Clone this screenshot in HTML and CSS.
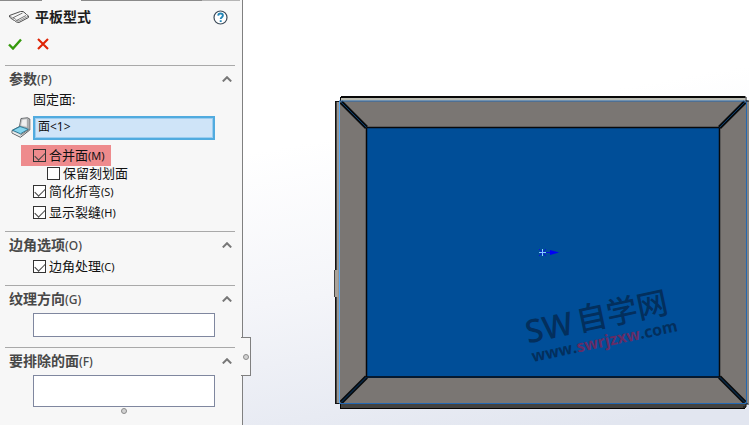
FILE: index.html
```html
<!DOCTYPE html>
<html lang="zh-CN">
<head>
<meta charset="utf-8">
<meta name="viewport" content="width=device-width, initial-scale=1">
<title>平板型式</title>
<link rel="stylesheet" href="styles.css">
</head>
<body>
<main class="app">
  <form class="panel">
    <div class="tabs"><span class="tab-edge"></span><span class="tab-edge"></span><span class="tab-edge light"></span></div>
    <header class="title-row">
      <svg class="title-icon" viewBox="0 0 22 14" aria-hidden="true">
        <path d="M1.500 5.500 12.500 1.500 15 1.500 17 3 18.500 4.500 20.500 6V7.500L11 12.500 8.500 12 6.500 10.500 4.500 9.500 1.500 7Z" fill="#f6f6f6" stroke="#505050"/>
        <path d="M1.500 5.500 4.500 8 7 8.500 8.500 10.500 11 11 20.500 6" fill="none" stroke="#666" stroke-width=".7"/>
        <path d="M4.500 8 14.500 3M8.500 10.500 18 5.500" fill="none" stroke="#666" stroke-width=".9"/>
      </svg>
      <h1>平板型式</h1>
      <button type="button" class="help" aria-label="帮助">
        <svg viewBox="0 0 15 15"><circle cx="7.5" cy="7.5" r="6.5" fill="#fff" stroke="#3d4b59" stroke-width="1.2"/><path d="M5.2 5.6C5.3 4 6.2 3.5 7.5 3.5c1.5 0 2.4.8 2.4 2 0 1.700-2.200 1.700-2.200 3.600M7.700 10.200v1.700" fill="none" stroke="#2386b8" stroke-width="1.9"/></svg>
      </button>
    </header>
    <div class="actions">
      <button type="submit" aria-label="确定"><svg viewBox="0 0 14 12"><path d="M1 6.5 5 10.5 13 1.5" fill="none" stroke="#35990c" stroke-width="2.4"/></svg></button>
      <button type="reset" aria-label="取消"><svg viewBox="0 0 14 12"><path d="M2 1 12 11M12 1 2 11" fill="none" stroke="#df2405" stroke-width="2.1"/></svg></button>
    </div>

    <section class="group">
      <div class="group-head"><h2>参数<small>(P)</small></h2>
        <button type="button" class="fold" aria-label="折叠参数"><svg viewBox="0 0 10 6"><path d="M.8 5.4 5 1.2 9.2 5.4"/></svg></button></div>
      <div class="group-body params">
        <label class="caption" for="fixed-face">固定面:</label>
        <div class="picker">
          <svg viewBox="0 0 20 21" aria-hidden="true">
            <path d="M1 13.500 8.500 9.500 10 1.500 16.500.800 18.800 2V13L9.500 20.300 1 16Z" fill="#d9dadb" stroke="#4c4f52" stroke-width=".9"/>
            <path d="M10.300 2 16.500 1.300V11L9 9Z" fill="#d4d5d6" stroke="#888b8d" stroke-width=".6"/>
            <path d="M11.500 3 15.500 2.500V9L10.500 8.500Z" fill="#efefef"/>
            <path d="M16.800 1.500 18.300 2.500V12.500L16.800 12Z" fill="#aeb0b2"/>
            <path d="M1.500 13.300 9 9.500 17.300 12.200 9.500 16.800Z" fill="#86d5ee" stroke="#23708e" stroke-width=".9"/>
            <path d="M1.500 14.500 9.500 18.200V19.600L1.500 15.700Z" fill="#eee"/>
            <path d="M9.500 18 18 12.500" fill="none" stroke="#606366" stroke-width=".8"/>
          </svg>
          <input id="fixed-face" class="selected" type="text" value="面&lt;1&gt;" readonly>
        </div>
        <label class="check marked"><input type="checkbox" checked><span>合并面<small>(M)</small></span></label>
        <label class="check nested"><input type="checkbox"><span>保留刻划面</span></label>
        <label class="check"><input type="checkbox" checked><span>简化折弯<small>(S)</small></span></label>
        <label class="check"><input type="checkbox" checked><span>显示裂缝<small>(H)</small></span></label>
      </div>
    </section>

    <section class="group">
      <div class="group-head"><h2>边角选项<small>(O)</small></h2>
        <button type="button" class="fold" aria-label="折叠边角选项"><svg viewBox="0 0 10 6"><path d="M.8 5.4 5 1.2 9.2 5.4"/></svg></button></div>
      <div class="group-body corners">
        <label class="check compact"><input type="checkbox" checked><span>边角处理<small>(C)</small></span></label>
      </div>
    </section>

    <section class="group">
      <div class="group-head"><h2><label for="grain">纹理方向<small>(G)</small></label></h2>
        <button type="button" class="fold" aria-label="折叠纹理方向"><svg viewBox="0 0 10 6"><path d="M.8 5.4 5 1.2 9.2 5.4"/></svg></button></div>
      <div class="group-body"><input id="grain" type="text"></div>
    </section>

    <section class="group">
      <div class="group-head"><h2><label for="exclude">要排除的面<small>(F)</small></label></h2>
        <button type="button" class="fold" aria-label="折叠要排除的面"><svg viewBox="0 0 10 6"><path d="M.8 5.4 5 1.2 9.2 5.4"/></svg></button></div>
      <div class="group-body last"><textarea id="exclude"></textarea><span class="grip"></span></div>
    </section>
    <button type="button" class="splitter" aria-label="调整面板宽度"><span class="grip"></span></button>
  </form>

  <div class="viewport">
    <svg class="scene" viewBox="243 0 506 425" preserveAspectRatio="xMinYMin slice" role="img" aria-label="钣金零件">
      <g shape-rendering="crispEdges">
        <path d="M335 101h5v302h-5z" fill="#99958f"/>
        <path d="M335 101h5v1h-4v301h4v1h-5z" fill="#111"/>
        <path d="M336 102h1v301h-1z" fill="#454545"/>
        <path d="M335 270h3v27h-3z" fill="#a9a39b"/><path d="M334 270h1v27h-1z" fill="#444"/>
        <path d="M745 101h4v302h-4z" fill="#8b8782"/>
        <path d="M340 98h405v3H340z" fill="#b9bab0"/>
        <path d="M341 96h404v2H341zM340 97h1v4h-1z" fill="#080808"/>
        <path d="M340 404h406v4H340z" fill="#424240"/>
        <path d="M340 408h405v1H340zM340 404h1v4h-1z" fill="#050505"/>
        <path d="M340 101h406v303H340z" fill="#7a7673"/>
        <path d="M366 127h354v251H366z" fill="#004e98"/>
      </g>
      <path d="M366.500 127.500H719.500V377H366.500Z" fill="none" stroke="#07090c" stroke-width="1.500"/>
      <g fill="none">
        <path d="M341 102 366.500 127.500M745 102 719.500 127.500M341 402.500 366.500 377M745 402.500 719.500 377" stroke="#090b0d" stroke-width="4"/>
        <path d="M341 102 366.500 127.500M745 102 719.500 127.500M341 402.500 366.500 377M745 402.500 719.500 377" stroke="#073d70" stroke-width="1"/>
        <path d="M339.500 101V403.500" stroke="#58a8f5"/>
        <path d="M339 101H748M340 403.500H748M746.500 101V404" stroke="#2468b2"/>
      </g>
      <path d="M743 97h3v4h3M743 407h3v-3h3" fill="none" stroke="#111"/>
      <g class="origin" fill="none"><path d="m539 249 7 7m0-7-7 7M546 252.500h5" stroke="#0714d8"/><path d="M539 252.500h7M542.500 249v7" stroke="#83caff"/><path d="m550 250 9 2.500-9 2.500z" fill="#0000f5"/></g>
      <g class="watermark" transform="translate(531 343) rotate(-12)">
        <text class="mark-name" x="-3" y="0">SW</text>
        <text class="mark-name mark-cjk" x="49" y="-1">自学网</text>
        <text class="mark-url" x="-2" y="19">www.<tspan class="mark-red">swrjzxw</tspan>.com</text>
      </g>
    </svg>
  </div>
</main>
</body>
</html>
```
FILE: styles.css
```css
* { box-sizing: border-box; }
body { margin: 0; font-family: "Noto Sans", "Noto Sans CJK SC", sans-serif; font-size: 13px; color: #111; }
.app { display: flex; min-height: 100vh; }
svg { display: block; }
button { border: 0; padding: 0; background: none; }
h1, h2 { margin: 0; font-size: 14px; font-weight: 700; line-height: 20px; }
h1 { color: #1d1d1d; }
h2 { color: #484848; }
small { font-size: 11px; font-weight: 400; }
h2 small { font-size: 12px; font-weight: 500; }

.panel { position: relative; flex: 0 0 243px; background: #f7f7f7; border-right: 1px solid #808080; }
.tabs { display: flex; height: 1px; margin-right: 2px; }
.tab-edge { flex: 0 0 42px; background: #8a8a8a; }
.tab-edge + .tab-edge { flex: 0 0 121px; margin-left: auto; }
.tab-edge.tab-edge.light { flex: 0 0 38px; margin-left: 0; background: #b5b5b5; }

.title-row { display: flex; align-items: center; gap: 5px; height: 32px; padding: 0 14px 0 8px; }
.title-icon { width: 22px; height: 14px; }
.help { width: 15px; height: 15px; margin-left: auto; }
.actions { display: flex; align-items: flex-start; gap: 14px; height: 32px; padding: 5px 8px; }
.actions svg { width: 14px; height: 12px; }

.group { margin: 0 7px 0 5px; border-top: 1px solid #a9a9a9; }
.group-head { display: flex; align-items: center; justify-content: space-between; height: 26px; padding: 0 3px 0 4px; }
.fold svg { width: 10px; height: 6px; fill: none; stroke: #777; stroke-width: 2; }
.group-body { display: flex; flex-direction: column; padding: 1px 20px 10px 28px; }
.params { padding: 0 20px 8px 28px; }
.corners { padding-bottom: 11px; }
.last { padding-bottom: 0; }

.caption { height: 24px; line-height: 15px; }
.picker { display: flex; margin: 0 0 5px -22px; gap: 2px; }
.picker svg { flex: 0 0 20px; height: 21px; margin-top: 1px; }
input[type="text"], textarea {
  display: block; width: 100%; height: 24px; margin: 0; padding: 0 4px; resize: none;
  border: 1px solid #7f879f; border-radius: 0; background: #fff; outline: 0; font: inherit; color: #111;
}
textarea { height: 32px; }
input[type="text"].selected { flex: 1; min-width: 0; padding: 0 3px 5px; border: 2px solid #51abdf; background: #cfe4f8; box-shadow: inset 0 0 0 1px #9bcdf0; font-size: 12px; }

.check { display: flex; align-items: center; align-self: flex-start; gap: 3px; height: 21px; line-height: 13px; white-space: nowrap; }
.check input {
  appearance: none; position: relative; flex: 0 0 13px; height: 13px; margin: 0; border: 1px solid #333; background: #fff;
}
.check input:checked::after { content: ""; position: absolute; left: 1px; top: 2px; width: 9px; height: 5px; border: solid #444; border-width: 0 0 1px 1px; transform: rotate(-45deg); }
.marked { margin-left: -12px; padding: 0 6px 0 12px; background: #ee8b8d; }
.marked input:checked { background: #ee8b8d; }
.nested { height: 15px; margin-left: 14px; }
.compact { height: 15px; }

.grip { display: block; width: 6px; height: 6px; border: 1px solid #8b8b8b; border-radius: 50%; background: #d2d2d2; }
.last .grip { align-self: center; margin: 1px 0 0; }
.splitter { position: absolute; left: 241px; top: 337px; display: flex; align-items: center; width: 10px; height: 39px; padding-left: 2px; background: #f7f7f7; border: 1px solid #808080; border-left: 0; }

.viewport { flex: 1; min-width: 0; background: linear-gradient(170deg, #fff 30%, #f4f5f9 60%, #e2e6f0 95%); }
.scene { width: 100%; height: 100%; }
.watermark { fill: #032f5d; }
.mark-name { font-size: 32px; font-weight: 600; font-family: "Open Sans", "Noto Sans CJK SC", sans-serif; }
.mark-cjk { font-size: 31px; font-weight: 500; }
.mark-url { font: 700 16px "Open Sans", sans-serif; }
.mark-red { fill: #652c65; }
```
